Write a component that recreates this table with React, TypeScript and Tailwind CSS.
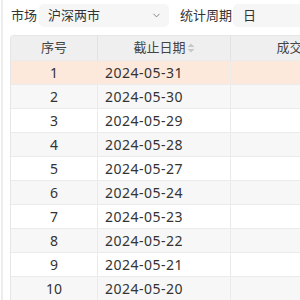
import { ChevronDown } from "lucide-react";

const rows = [
  "2024-05-31",
  "2024-05-30",
  "2024-05-29",
  "2024-05-28",
  "2024-05-27",
  "2024-05-24",
  "2024-05-23",
  "2024-05-22",
  "2024-05-21",
  "2024-05-20",
];

export default function App() {
  return (
    <div
      className="w-[300px] h-[300px] overflow-hidden bg-white flex text-[#333]"
      style={{ fontFamily: '"Noto Sans", "Noto Sans CJK SC", sans-serif' }}
    >
      {/* left rail */}
      <div className="w-[2px] ml-[1px] bg-[#ececec] shrink-0" />

      <div className="flex-1 min-w-0 pl-[7px] pt-[4px]">
        {/* Filters */}
        <div className="flex items-center h-[23px] text-[13px] whitespace-nowrap">
          <span className="ml-[1px] mr-[2px]">市场</span>
          <div className="w-[130px] h-[23px] rounded-[5px] bg-[#f6f6f6] flex items-center pl-[9px] pr-[7px] shrink-0">
            <span className="flex-1">沪深两市</span>
            <ChevronDown className="w-[11px] h-[11px] text-[#555]" strokeWidth={1.5} />
          </div>
          <span className="ml-[11px] mr-[1px]">统计周期</span>
          <div className="w-[120px] h-[23px] rounded-l-[5px] bg-[#f6f6f6] flex items-center px-[10px] shrink-0">
            日
          </div>
        </div>

        {/* Table */}
        <div className="mt-[8px] border border-[#e6e6e6] border-r-0 rounded-tl-[4px] overflow-hidden w-[400px] text-[13px]">
          <div className="flex h-[24px] bg-[#efefef] text-[#444]">
            <div className="w-[87px] flex items-center justify-center border-r border-[#e2e2e2]">序号</div>
            <div className="w-[133px] flex items-center justify-center border-r border-[#e2e2e2]">
              截止日期
              <svg width="8" height="10" viewBox="0 0 8 10" className="ml-[1px]">
                <path d="M4 0.5 L7.5 4 L0.5 4 Z" fill="#c8c8c8" />
                <path d="M4 9.5 L7.5 6 L0.5 6 Z" fill="#c8c8c8" />
              </svg>
            </div>
            <div className="w-[130px] flex items-center justify-center">成交量</div>
          </div>
          {rows.map((d, i) => (
            <div
              key={d}
              className={`flex h-[24px] border-t border-[#ebebeb] text-[14px] ${
                i === 0 ? "bg-[#fde9db]" : i % 2 === 1 ? "bg-[#f7f7f7]" : "bg-white"
              }`}
            >
              <div className="w-[87px] flex items-center justify-center border-r border-[#ebebeb]">{i + 1}</div>
              <div className="w-[133px] flex items-center pl-[7px] tracking-[0.5px] border-r border-[#ebebeb]">{d}</div>
              <div className="flex-1" />
            </div>
          ))}
          <div className="h-[10px] bg-[#e6e6e6]" />
        </div>
      </div>
    </div>
  );
}
